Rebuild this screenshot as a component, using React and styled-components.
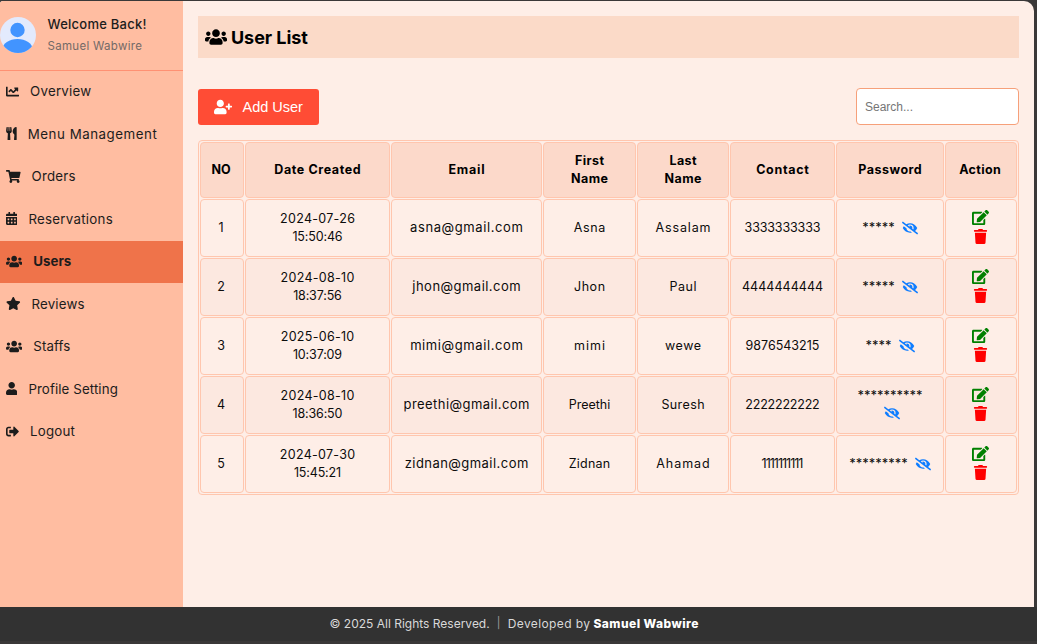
import React from 'react';
import styled, { createGlobalStyle } from 'styled-components';
import {
  FaChartLine, FaUtensils, FaShoppingCart, FaCalendarAlt, FaUsers, FaStar,
  FaUser, FaSignOutAlt, FaUserPlus, FaEyeSlash, FaEdit, FaTrash,
} from 'react-icons/fa';

const Global = createGlobalStyle`
  *, *::before, *::after { box-sizing: border-box; }
  body {
    margin: 0;
    background: #3a3838;
    font-family: Inter, "Open Sans", sans-serif;
    overflow: hidden;
  }
`;

const Page = styled.div`
  height: 644px;
  padding-top: 1px;
  display: flex;
  flex-direction: column;
`;

const Body = styled.div`
  display: flex;
  height: 606px;
  width: 1034px;
  background: #feeee7;
  border-radius: 3px 10px 0 0;
  overflow: hidden;
`;

const Sidebar = styled.aside`
  width: 183px;
  flex: none;
  background: #ffbda1;
  color: #1c1c1c;
`;

const Profile = styled.div`
  height: 69.9px;
  display: flex;
  gap: 11.5px;
  border-bottom: 1px solid #ff9173;
  padding-top: 12px;
`;

const Avatar = styled.svg`
  width: 36px;
  height: 36px;
  margin-top: 4px;
`;

const Greeting = styled.div`
  font-size: 13px;
  line-height: 23px;
  font-weight: 500;
  white-space: nowrap;
  letter-spacing: 0.25px;
`;

const UserName = styled.div`
  font-size: 11.5px;
  line-height: 20px;
  color: #746a67;
  white-space: nowrap;
  letter-spacing: 0.3px;
`;

const MenuItem = styled.a`
  display: flex;
  align-items: center;
  gap: 11px;
  height: 42.5px;
  padding: 0 0 2px 6px;
  font-size: 13.3px;
  white-space: nowrap;
  letter-spacing: ${(p) => p.$ls || 0}px;
  background: ${(p) => (p.$active ? '#ef734a' : 'transparent')};
  font-weight: ${(p) => (p.$active ? 700 : 400)};
  svg {
    flex: none;
    width: ${(p) => p.$iconWidth}px;
    height: 13px;
  }
`;

const Main = styled.main`
  flex: 1;
  min-width: 0;
  padding: 15px 15px 0;
`;

const Title = styled.h1`
  margin: 0;
  height: 42px;
  padding: 0 7px;
  display: flex;
  align-items: center;
  gap: 4px;
  background: #fbdac8;
  color: #000;
  font-size: 18px;
  font-weight: 700;
  letter-spacing: -0.05px;
`;

const Toolbar = styled.div`
  display: flex;
  justify-content: space-between;
  align-items: center;
  margin-top: 30px;
  height: 37px;
`;

const AddButton = styled.button`
  width: 121px;
  height: 36px;
  margin-top: 1px;
  border: 0;
  border-radius: 3px;
  padding: 0 0 0 16px;
  display: flex;
  align-items: center;
  gap: 10.5px;
  background: #ff4c35;
  color: #fff;
  font: 14.5px "Liberation Sans", sans-serif;
`;

const Search = styled.input`
  width: 163px;
  height: 37px;
  border: 1px solid #f6a07a;
  border-radius: 4px;
  padding: 0 8px;
  background: #fff;
  font: 12px "Liberation Sans", sans-serif;
  &::placeholder { color: #757575; opacity: 1; }
`;

const Table = styled.table`
  table-layout: fixed;
  width: 821px;
  margin-top: 15px;
  border: 1px solid #ffc6ae;
  border-radius: 4px;
  border-collapse: separate;
  border-spacing: 1px;
  font-size: 12.5px;
  line-height: 18px;
  text-align: center;
  color: #0c0c0c;

  th:first-child,
  td:first-child,
  th:last-child,
  td:last-child { padding-right: 2px; }
`;

const Cell = styled.td`
  height: 58px;
  padding: 0 0 ${(p) => p.$lift || 0}px;
  border: 1px solid #ffc6ae;
  border-radius: 4px;
  vertical-align: middle;
  white-space: nowrap;
`;

const HeadCell = styled(Cell)`
  height: 56px;
  background: #fcd9ca;
  color: #000;
  font-weight: 700;
`;

const Row = styled.tr`
  & > td { background: ${(p) => (p.$alt ? '#fce8e0' : 'transparent')}; }
`;

const Label = styled.span`
  font-size: ${(p) => p.$size || 12.5}px;
  letter-spacing: ${(p) => p.$ls || 0}px;
  margin-right: ${(p) => -(p.$ls || 0)}px;
`;

const Secret = styled.div`
  display: flex;
  flex-direction: ${(p) => (p.$wrapped ? 'column' : 'row')};
  align-items: center;
  justify-content: center;
  column-gap: 7px;
  padding-bottom: ${(p) => (p.$wrapped ? 2 : 1)}px;
  svg { margin-left: ${(p) => (p.$wrapped ? 4 : 0)}px; }
`;

const Stars = styled.span`
  color: #111;
  font-weight: 500;
`;

const Actions = styled.div`
  display: flex;
  flex-direction: column;
  align-items: center;
  gap: 3px;
  padding-bottom: 3px;
`;

const Footer = styled.footer`
  height: 34px;
  background: #323232;
  color: #d9d9d9;
  display: flex;
  align-items: center;
  padding: 0 0 2px 329.5px;
  font-size: 12px;
  white-space: nowrap;
`;

const Divider = styled.span`
  width: 18px;
  text-align: center;
  font-size: 11px;
  color: #9a9a9a;
`;

const Credit = styled.span`
  letter-spacing: 0.4px;
`;

const Author = styled.strong`
  margin-left: 3px;
  color: #fff;
  font-weight: 800;
  letter-spacing: 0.45px;
`;

const menu = [
  { label: 'Overview', Icon: FaChartLine, iconWidth: 13, ls: 0.25 },
  { label: 'Menu Management', Icon: FaUtensils, iconWidth: 10.8, ls: 0.53 },
  { label: 'Orders', Icon: FaShoppingCart, iconWidth: 14.6, ls: 0.2 },
  { label: 'Reservations', Icon: FaCalendarAlt, iconWidth: 11.4, ls: 0.27 },
  { label: 'Users', Icon: FaUsers, iconWidth: 16.3, active: true },
  { label: 'Reviews', Icon: FaStar, iconWidth: 14.6, ls: 0.15 },
  { label: 'Staffs', Icon: FaUsers, iconWidth: 16.3, ls: 0.1 },
  { label: 'Profile Setting', Icon: FaUser, iconWidth: 11.4, ls: 0.1 },
  { label: 'Logout', Icon: FaSignOutAlt, iconWidth: 13, ls: 0.2 },
];

const columns = [
  { lines: ['NO'], width: 44, ls: 0 },
  { lines: ['Date Created'], width: 145, ls: 0.6 },
  { lines: ['Email'], width: 151, ls: 0.8 },
  { lines: ['First', 'Name'], width: 93, ls: 0.4 },
  { lines: ['Last', 'Name'], width: 92, ls: 0.4 },
  { lines: ['Contact'], width: 105, ls: 0.7 },
  { lines: ['Password'], width: 108, ls: 0.5 },
  { lines: ['Action'], width: 72, ls: 0.35 },
];

/* Text fields hold [value, tracking]. */
const users = [
  { date: '2024-07-26', time: '15:50:46', email: ['asna@gmail.com', 0.6], first: ['Asna', 0.6], last: ['Assalam', 0.85], contact: ['3333333333', -0.15], stars: 5 },
  { date: '2024-08-10', time: '18:37:56', email: ['jhon@gmail.com', 0.47], first: ['Jhon', 0.6], last: ['Paul', 0.5], contact: ['4444444444', 0.05], stars: 5 },
  { date: '2025-06-10', time: '10:37:09', email: ['mimi@gmail.com', 0.6], first: ['mimi', 1], last: ['wewe', 0.6], contact: ['9876543215', 0], stars: 4 },
  { date: '2024-08-10', time: '18:36:50', email: ['preethi@gmail.com', 0.45], first: ['Preethi', 0], last: ['Suresh', 0.4], contact: ['2222222222', -0.2], stars: 10 },
  { date: '2024-07-30', time: '15:45:21', email: ['zidnan@gmail.com', 0.45], first: ['Zidnan', 0.2], last: ['Ahamad', 0.95], contact: ['1111111111', -1], stars: 9 },
];

function TextCell({ text: [value, tracking], size, lift }) {
  return <Cell $lift={lift}><Label $ls={tracking} $size={size}>{value}</Label></Cell>;
}

export default function App() {
  return (
    <Page>
      <Global />
      <Body>
        <Sidebar>
          <Profile>
            <Avatar viewBox="0 0 36 36">
              <clipPath id="disc"><circle cx="18" cy="18" r="18" /></clipPath>
              <circle cx="18" cy="18" r="18" fill="#e3eafd" />
              <g clipPath="url(#disc)" fill="#4294ff">
                <circle cx="17.5" cy="13" r="7.2" />
                <ellipse cx="17.5" cy="32" rx="15" ry="10" />
              </g>
            </Avatar>
            <div>
              <Greeting>Welcome Back!</Greeting>
              <UserName>Samuel Wabwire</UserName>
            </div>
          </Profile>
          {menu.map(({ label, Icon, iconWidth, active, ls }) => (
            <MenuItem key={label} $active={active} $ls={ls} $iconWidth={iconWidth}>
              <Icon />
              {label}
            </MenuItem>
          ))}
        </Sidebar>
        <Main>
          <Title><FaUsers size={22} />User List</Title>
          <Toolbar>
            <AddButton><FaUserPlus size={18} />Add User</AddButton>
            <Search placeholder="Search..." />
          </Toolbar>
          <Table>
            <colgroup>{columns.map((c, i) => <col key={i} style={{ width: c.width }} />)}</colgroup>
            <thead>
              <tr>
                {columns.map(({ lines, ls }) => (
                  <HeadCell as="th" key={lines.join()}>
                    {lines.map((l) => <div key={l}><Label $ls={ls}>{l}</Label></div>)}
                  </HeadCell>
                ))}
              </tr>
            </thead>
            <tbody>
              {users.map((u, i) => (
                <Row key={i} $alt={i % 2 === 1}>
                  <Cell>{i + 1}</Cell>
                  <Cell>
                    <div><Label $ls={0.3}>{u.date}</Label></div>
                    <div><Label $ls={-0.15}>{u.time}</Label></div>
                  </Cell>
                  <TextCell text={u.email} size={13} lift={2} />
                  <TextCell text={u.first} />
                  <TextCell text={u.last} />
                  <TextCell text={u.contact} />
                  <Cell>
                    <Secret $wrapped={u.stars > 9}>
                      <Stars>{'*'.repeat(u.stars)}</Stars>
                      <FaEyeSlash size={16} color="#0f7dff" />
                    </Secret>
                  </Cell>
                  <Cell>
                    <Actions>
                      <FaEdit size={17} color="green" />
                      <FaTrash size={15} color="red" />
                    </Actions>
                  </Cell>
                </Row>
              ))}
            </tbody>
          </Table>
        </Main>
      </Body>
      <Footer>
        <span>© 2025 All Rights Reserved.</span>
        <Divider>|</Divider>
        <Credit>Developed by</Credit>
        <Author>Samuel Wabwire</Author>
      </Footer>
    </Page>
  );
}
